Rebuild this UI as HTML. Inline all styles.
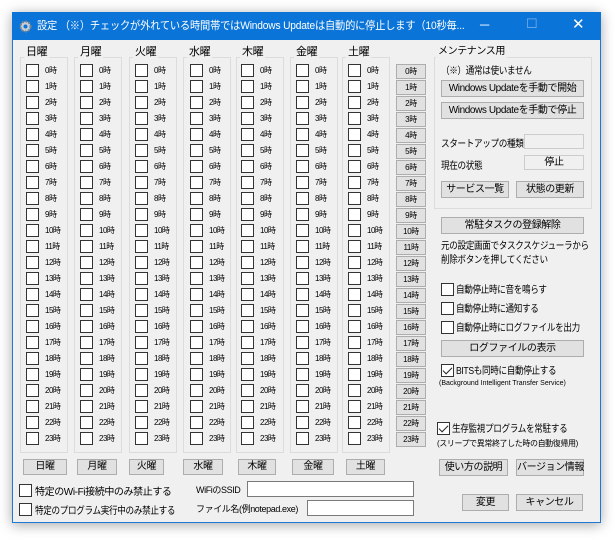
<!DOCTYPE html><html><head><meta charset="utf-8"><style>
*{box-sizing:border-box;margin:0;padding:0}
body{width:615px;height:540px;background:#fff;position:relative;overflow:hidden;font-family:"Liberation Sans","Noto Sans CJK JP",sans-serif;font-size:10px;letter-spacing:-0.4px;color:#000}
.win{position:absolute;left:12px;top:12px;width:589px;height:511px;background:#f0f0f0;border:1px solid #1f78d4;box-shadow:0 2px 12px rgba(0,0,0,.35)}
.tb{position:absolute;left:12px;top:12px;width:589px;height:28px;background:#0a74d8;color:#fff;font-size:11px;letter-spacing:-0.2px;line-height:28px;padding-left:25px;white-space:nowrap;overflow:hidden}
.tb span{display:inline-block;transform:scaleX(.93);transform-origin:0 0}
.a{position:absolute;white-space:nowrap}
.n{transform:scaleX(.86);transform-origin:0 0}
.gb{position:absolute;border:1px solid #dcdcdc}
.gl{position:absolute;background:#f0f0f0;padding:0 2px;font-size:11px;line-height:12px}
.col{position:absolute;width:44px}
.col div{height:16px;line-height:14px;font-size:8px;letter-spacing:-0.5px;white-space:nowrap}
.cb{display:inline-block;width:13px;height:13px;background:#fff;border:1px solid #333;vertical-align:top;margin-right:6px}
.hb{position:absolute;left:396px;width:30px}
.hb div{height:15px;margin-bottom:1px;background:#e1e1e1;border:1px solid #adadad;font-size:8px;text-align:center;line-height:13px}
.btn{position:absolute;background:#e1e1e1;border:1px solid #adadad;text-align:center;font-size:10px;white-space:nowrap}
.inp{position:absolute;background:#fff;border:1px solid #7a7a7a}
.ck{position:absolute;width:13px;height:13px;background:#fff;border:1px solid #333}
.ck.on::after{content:"";position:absolute;left:3px;top:0px;width:4px;height:8px;border:solid #222;border-width:0 1.5px 1.5px 0;transform:rotate(45deg)}
</style></head><body>
<div class="win"></div>
<div class="tb"><span>設定 （※）チェックが外れている時間帯ではWindows Updateは自動的に停止します（10秒毎...</span></div>
<svg class="a" style="left:19px;top:20px" width="13" height="13" viewBox="0 0 13 13"><circle cx="6.5" cy="6.5" r="5" fill="#c8d0d8" stroke="#7a8590" stroke-width="2" stroke-dasharray="2 1.3"/><circle cx="6.5" cy="6.5" r="2" fill="#0a74d8"/></svg>
<div class="a" style="left:480px;top:17px;color:#fff;font-size:13px">─</div>
<div class="a" style="left:526px;top:16px;color:#7fb4ea;font-size:13px">☐</div>
<div class="a" style="left:572px;top:15px;color:#fff;font-size:15px">✕</div>

<div class="gb" style="left:20px;top:57px;width:48px;height:396px"></div><div class="gl" style="left:24px;top:46px">日曜</div>
<div class="gb" style="left:74px;top:57px;width:48px;height:396px"></div><div class="gl" style="left:78px;top:46px">月曜</div>
<div class="gb" style="left:129px;top:57px;width:48px;height:396px"></div><div class="gl" style="left:133px;top:46px">火曜</div>
<div class="gb" style="left:183px;top:57px;width:48px;height:396px"></div><div class="gl" style="left:187px;top:46px">水曜</div>
<div class="gb" style="left:236px;top:57px;width:48px;height:396px"></div><div class="gl" style="left:240px;top:46px">木曜</div>
<div class="gb" style="left:290px;top:57px;width:48px;height:396px"></div><div class="gl" style="left:294px;top:46px">金曜</div>
<div class="gb" style="left:342px;top:57px;width:48px;height:396px"></div><div class="gl" style="left:346px;top:46px">土曜</div>

<div class="col" style="left:26px;top:64px"><div><i class="cb"></i>0時</div><div><i class="cb"></i>1時</div><div><i class="cb"></i>2時</div><div><i class="cb"></i>3時</div><div><i class="cb"></i>4時</div><div><i class="cb"></i>5時</div><div><i class="cb"></i>6時</div><div><i class="cb"></i>7時</div><div><i class="cb"></i>8時</div><div><i class="cb"></i>9時</div><div><i class="cb"></i>10時</div><div><i class="cb"></i>11時</div><div><i class="cb"></i>12時</div><div><i class="cb"></i>13時</div><div><i class="cb"></i>14時</div><div><i class="cb"></i>15時</div><div><i class="cb"></i>16時</div><div><i class="cb"></i>17時</div><div><i class="cb"></i>18時</div><div><i class="cb"></i>19時</div><div><i class="cb"></i>20時</div><div><i class="cb"></i>21時</div><div><i class="cb"></i>22時</div><div><i class="cb"></i>23時</div></div>
<div class="col" style="left:80px;top:64px"><div><i class="cb"></i>0時</div><div><i class="cb"></i>1時</div><div><i class="cb"></i>2時</div><div><i class="cb"></i>3時</div><div><i class="cb"></i>4時</div><div><i class="cb"></i>5時</div><div><i class="cb"></i>6時</div><div><i class="cb"></i>7時</div><div><i class="cb"></i>8時</div><div><i class="cb"></i>9時</div><div><i class="cb"></i>10時</div><div><i class="cb"></i>11時</div><div><i class="cb"></i>12時</div><div><i class="cb"></i>13時</div><div><i class="cb"></i>14時</div><div><i class="cb"></i>15時</div><div><i class="cb"></i>16時</div><div><i class="cb"></i>17時</div><div><i class="cb"></i>18時</div><div><i class="cb"></i>19時</div><div><i class="cb"></i>20時</div><div><i class="cb"></i>21時</div><div><i class="cb"></i>22時</div><div><i class="cb"></i>23時</div></div>
<div class="col" style="left:135px;top:64px"><div><i class="cb"></i>0時</div><div><i class="cb"></i>1時</div><div><i class="cb"></i>2時</div><div><i class="cb"></i>3時</div><div><i class="cb"></i>4時</div><div><i class="cb"></i>5時</div><div><i class="cb"></i>6時</div><div><i class="cb"></i>7時</div><div><i class="cb"></i>8時</div><div><i class="cb"></i>9時</div><div><i class="cb"></i>10時</div><div><i class="cb"></i>11時</div><div><i class="cb"></i>12時</div><div><i class="cb"></i>13時</div><div><i class="cb"></i>14時</div><div><i class="cb"></i>15時</div><div><i class="cb"></i>16時</div><div><i class="cb"></i>17時</div><div><i class="cb"></i>18時</div><div><i class="cb"></i>19時</div><div><i class="cb"></i>20時</div><div><i class="cb"></i>21時</div><div><i class="cb"></i>22時</div><div><i class="cb"></i>23時</div></div>
<div class="col" style="left:190px;top:64px"><div><i class="cb"></i>0時</div><div><i class="cb"></i>1時</div><div><i class="cb"></i>2時</div><div><i class="cb"></i>3時</div><div><i class="cb"></i>4時</div><div><i class="cb"></i>5時</div><div><i class="cb"></i>6時</div><div><i class="cb"></i>7時</div><div><i class="cb"></i>8時</div><div><i class="cb"></i>9時</div><div><i class="cb"></i>10時</div><div><i class="cb"></i>11時</div><div><i class="cb"></i>12時</div><div><i class="cb"></i>13時</div><div><i class="cb"></i>14時</div><div><i class="cb"></i>15時</div><div><i class="cb"></i>16時</div><div><i class="cb"></i>17時</div><div><i class="cb"></i>18時</div><div><i class="cb"></i>19時</div><div><i class="cb"></i>20時</div><div><i class="cb"></i>21時</div><div><i class="cb"></i>22時</div><div><i class="cb"></i>23時</div></div>
<div class="col" style="left:241px;top:64px"><div><i class="cb"></i>0時</div><div><i class="cb"></i>1時</div><div><i class="cb"></i>2時</div><div><i class="cb"></i>3時</div><div><i class="cb"></i>4時</div><div><i class="cb"></i>5時</div><div><i class="cb"></i>6時</div><div><i class="cb"></i>7時</div><div><i class="cb"></i>8時</div><div><i class="cb"></i>9時</div><div><i class="cb"></i>10時</div><div><i class="cb"></i>11時</div><div><i class="cb"></i>12時</div><div><i class="cb"></i>13時</div><div><i class="cb"></i>14時</div><div><i class="cb"></i>15時</div><div><i class="cb"></i>16時</div><div><i class="cb"></i>17時</div><div><i class="cb"></i>18時</div><div><i class="cb"></i>19時</div><div><i class="cb"></i>20時</div><div><i class="cb"></i>21時</div><div><i class="cb"></i>22時</div><div><i class="cb"></i>23時</div></div>
<div class="col" style="left:296px;top:64px"><div><i class="cb"></i>0時</div><div><i class="cb"></i>1時</div><div><i class="cb"></i>2時</div><div><i class="cb"></i>3時</div><div><i class="cb"></i>4時</div><div><i class="cb"></i>5時</div><div><i class="cb"></i>6時</div><div><i class="cb"></i>7時</div><div><i class="cb"></i>8時</div><div><i class="cb"></i>9時</div><div><i class="cb"></i>10時</div><div><i class="cb"></i>11時</div><div><i class="cb"></i>12時</div><div><i class="cb"></i>13時</div><div><i class="cb"></i>14時</div><div><i class="cb"></i>15時</div><div><i class="cb"></i>16時</div><div><i class="cb"></i>17時</div><div><i class="cb"></i>18時</div><div><i class="cb"></i>19時</div><div><i class="cb"></i>20時</div><div><i class="cb"></i>21時</div><div><i class="cb"></i>22時</div><div><i class="cb"></i>23時</div></div>
<div class="col" style="left:348px;top:64px"><div><i class="cb"></i>0時</div><div><i class="cb"></i>1時</div><div><i class="cb"></i>2時</div><div><i class="cb"></i>3時</div><div><i class="cb"></i>4時</div><div><i class="cb"></i>5時</div><div><i class="cb"></i>6時</div><div><i class="cb"></i>7時</div><div><i class="cb"></i>8時</div><div><i class="cb"></i>9時</div><div><i class="cb"></i>10時</div><div><i class="cb"></i>11時</div><div><i class="cb"></i>12時</div><div><i class="cb"></i>13時</div><div><i class="cb"></i>14時</div><div><i class="cb"></i>15時</div><div><i class="cb"></i>16時</div><div><i class="cb"></i>17時</div><div><i class="cb"></i>18時</div><div><i class="cb"></i>19時</div><div><i class="cb"></i>20時</div><div><i class="cb"></i>21時</div><div><i class="cb"></i>22時</div><div><i class="cb"></i>23時</div></div>

<div class="hb" style="top:64px"><div>0時</div><div>1時</div><div>2時</div><div>3時</div><div>4時</div><div>5時</div><div>6時</div><div>7時</div><div>8時</div><div>9時</div><div>10時</div><div>11時</div><div>12時</div><div>13時</div><div>14時</div><div>15時</div><div>16時</div><div>17時</div><div>18時</div><div>19時</div><div>20時</div><div>21時</div><div>22時</div><div>23時</div></div>

<div class="btn" style="left:23px;top:459px;width:44px;height:16px;line-height:14px">日曜</div>
<div class="btn" style="left:77px;top:459px;width:40px;height:16px;line-height:14px">月曜</div>
<div class="btn" style="left:129px;top:459px;width:35px;height:16px;line-height:14px">火曜</div>
<div class="btn" style="left:183px;top:459px;width:40px;height:16px;line-height:14px">水曜</div>
<div class="btn" style="left:238px;top:459px;width:38px;height:16px;line-height:14px">木曜</div>
<div class="btn" style="left:292px;top:459px;width:42px;height:16px;line-height:14px">金曜</div>
<div class="btn" style="left:346px;top:459px;width:39px;height:16px;line-height:14px">土曜</div>

<div class="ck" style="left:19px;top:484px"></div><div class="a" style="left:35px;top:483px">特定のWi-Fi接続中のみ禁止する</div>
<div class="ck" style="left:19px;top:503px"></div><div class="a n" style="left:35px;top:502px">特定のプログラム実行中のみ禁止する</div>
<div class="a" style="left:196px;top:483px;font-size:9px">WiFiのSSID</div>
<div class="inp" style="left:247px;top:481px;width:167px;height:16px"></div>
<div class="a" style="left:196px;top:502px;font-size:9px">ファイル名(例notepad.exe)</div>
<div class="inp" style="left:307px;top:500px;width:107px;height:16px"></div>

<div class="gb" style="left:434px;top:57px;width:158px;height:152px"></div><div class="gl" style="left:436px;top:46px;font-size:10px">メンテナンス用</div>
<div class="a n" style="left:441px;top:62px">（※）通常は使いません</div>
<div class="btn" style="left:441px;top:80px;width:143px;height:17px;line-height:15px">Windows Updateを手動で開始</div>
<div class="btn" style="left:441px;top:102px;width:143px;height:17px;line-height:15px">Windows Updateを手動で停止</div>
<div class="a n" style="left:441px;top:135px">スタートアップの種類</div>
<div class="inp" style="left:524px;top:134px;width:60px;height:15px;border-color:#ccc;background:#f0f0f0"></div>
<div class="a n" style="left:441px;top:157px">現在の状態</div>
<div class="inp" style="left:524px;top:155px;width:60px;height:15px;border-color:#ccc;background:#f0f0f0;text-align:center;line-height:13px">停止</div>
<div class="btn" style="left:441px;top:181px;width:68px;height:17px;line-height:15px">サービス一覧</div>
<div class="btn" style="left:516px;top:181px;width:68px;height:17px;line-height:15px">状態の更新</div>
<div class="btn" style="left:441px;top:217px;width:143px;height:17px;line-height:15px">常駐タスクの登録解除</div>
<div class="a n" style="left:441px;top:237px">元の設定画面でタスクスケジューラから</div>
<div class="a n" style="left:441px;top:251px">削除ボタンを押してください</div>
<div class="ck" style="left:441px;top:283px"></div><div class="a n" style="left:456px;top:281px">自動停止時に音を鳴らす</div>
<div class="ck" style="left:441px;top:302px"></div><div class="a n" style="left:456px;top:300px">自動停止時に通知する</div>
<div class="ck" style="left:441px;top:321px"></div><div class="a n" style="left:456px;top:319px">自動停止時にログファイルを出力</div>
<div class="btn" style="left:441px;top:340px;width:143px;height:17px;line-height:15px">ログファイルの表示</div>
<div class="ck on" style="left:441px;top:364px"></div><div class="a n" style="left:456px;top:362px">BITSも同時に自動停止する</div>
<div class="a" style="left:439px;top:380px;font-size:7px;letter-spacing:0">(Background Intelligent Transfer Service)</div>
<div class="ck on" style="left:437px;top:422px"></div><div class="a n" style="left:452px;top:420px">生存監視プログラムを常駐する</div>
<div class="a" style="left:437px;top:438px;font-size:8px">(スリープで異常終了した時の自動復帰用)</div>
<div class="btn" style="left:439px;top:459px;width:69px;height:17px;line-height:15px">使い方の説明</div>
<div class="btn" style="left:516px;top:459px;width:68px;height:17px;line-height:15px">バージョン情報</div>
<div class="btn" style="left:462px;top:494px;width:47px;height:17px;line-height:15px">変更</div>
<div class="btn" style="left:516px;top:494px;width:67px;height:17px;line-height:15px">キャンセル</div>
</body></html>
